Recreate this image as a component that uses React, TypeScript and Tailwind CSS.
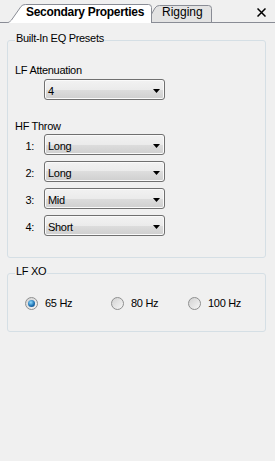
function Dropdown({ value }: { value: string }) {
  return (
    <div className="flex h-[21px] w-[121px] items-start justify-between rounded-[3px] border border-[#707070] bg-[linear-gradient(#f2f2f2,#ebebeb_50%,#dddddd_50%,#cfcfcf)] pl-[3px] pr-[4px] pt-[5px] shadow-[inset_0_0_0_1px_#fafafa]">
      <span className="leading-[13px]">{value}</span>
      <svg width="7" height="4" className="mt-[4px]">
        <polygon points="0,0 7,0 3.5,4" fill="#000" />
      </svg>
    </div>
  );
}

function Radio({ label, checked, w }: { label: string; checked?: boolean; w: string }) {
  return (
    <div className={`flex items-center ${w}`}>
      <span className="flex h-[13px] w-[13px] items-center justify-center rounded-full border border-[#8e8f8f] bg-[linear-gradient(135deg,#d2d2d2,#f6f6f6)]">
        {checked && (
          <span className="h-[7px] w-[7px] rounded-full bg-[radial-gradient(circle_at_40%_35%,#8fdcff,#1f73b4_55%,#0c3c6e)]" />
        )}
      </span>
      <span className="ml-[7px] leading-[13px]">{label}</span>
    </div>
  );
}

export default function App() {
  const throws = [
    { n: '1:', v: 'Long' },
    { n: '2:', v: 'Long' },
    { n: '3:', v: 'Mid' },
    { n: '4:', v: 'Short' },
  ];

  return (
    <div className="h-[461px] w-[275px] bg-[#f0f0f0] font-['Liberation_Sans',Arial,sans-serif] text-[11px] tracking-[-0.3px] text-black">
      {/* tab strip */}
      <div className="flex h-[23px] items-start border-b border-[#898c95]">
        <div className="relative z-10 ml-[6px] mt-[4px] h-[19px] w-[146px]">
          <svg className="absolute inset-0" width="146" height="19">
            <path
              d="M0.5,19 C3,18.5 4,17.5 5.5,16 L15,2.5 Q16.5,0.5 19.5,0.5 L142.5,0.5 Q145.5,0.5 145.5,3.5 L145.5,19"
              fill="#fff"
              stroke="#898c95"
            />
          </svg>
          <span className="relative block pl-[20px] text-[12px] font-bold leading-[16px]">
            Secondary Properties
          </span>
        </div>
        <div className="relative -ml-[10px] mt-[5px] h-[17px] w-[70px]">
          <svg className="absolute inset-0" width="70" height="17">
            <path
              d="M5,17 L13,3 Q14.5,0.5 17.5,0.5 L66.5,0.5 Q69.5,0.5 69.5,3.5 L69.5,17"
              fill="#e3e3e3"
              stroke="#898c95"
            />
          </svg>
          <span className="relative block pl-[20px] text-[12px] leading-[14px] tracking-normal">Rigging</span>
        </div>
        <svg width="9" height="9" className="ml-auto mr-[9px] mt-[8px]">
          <path d="M0.5,0.5 L8.5,8.5 M8.5,0.5 L0.5,8.5" stroke="#000" strokeWidth="1.5" />
        </svg>
      </div>

      {/* Built-In EQ Presets */}
      <fieldset className="ml-[7px] mr-[9px] mt-[9px] rounded-[3px] border border-[#d5dfe5] pb-[21px]">
        <legend className="ml-[7px] px-[1px] pb-[4px] leading-[13px]">Built-In EQ Presets</legend>
        <div className="mt-[15px] pl-[7px] leading-[13px]">LF Attenuation</div>
        <div className="ml-[36px] mt-[2px]">
          <Dropdown value="4" />
        </div>
        <div className="mt-[20px] pl-[7px] leading-[13px]">HF Throw</div>
        <div className="mt-[1px] flex flex-col gap-[6px]">
          {throws.map((t) => (
            <div key={t.n} className="flex">
              <span className="w-[26px] pt-[6px] text-right leading-[13px]">{t.n}</span>
              <div className="ml-[10px]">
                <Dropdown value={t.v} />
              </div>
            </div>
          ))}
        </div>
      </fieldset>

      {/* LF XO */}
      <fieldset className="ml-[7px] mr-[9px] mt-[7px] rounded-[3px] border border-[#d5dfe5] pb-[21px]">
        <legend className="ml-[7px] px-[1px] pb-[4px] leading-[13px]">LF XO</legend>
        <div className="mt-[15px] flex pl-[17px]">
          <Radio label="65 Hz" checked w="w-[86px]" />
          <Radio label="80 Hz" w="w-[77px]" />
          <Radio label="100 Hz" w="w-auto" />
        </div>
      </fieldset>
    </div>
  );
}
